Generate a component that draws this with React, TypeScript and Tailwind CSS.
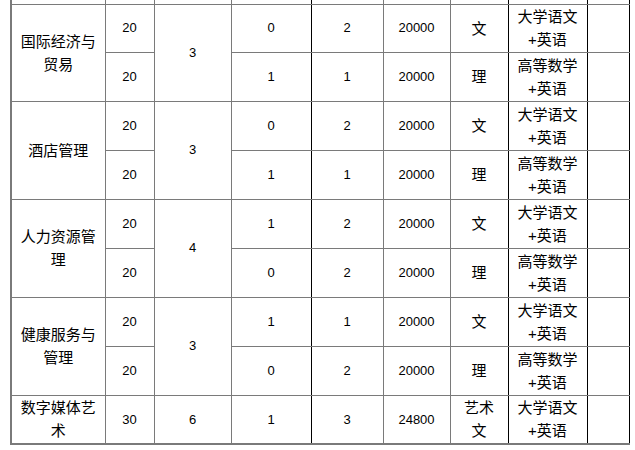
import type { ReactNode } from "react";

type Row = {
  major?: ReactNode;
  span?: number;
  count: string;
  groups?: string;
  a: string;
  b: string;
  fee: string;
  kind: ReactNode;
  exam: ReactNode;
  h: string;
};

const liberal = (
  <>
    大学语文
    <br />
    +英语
  </>
);
const science = (
  <>
    高等数学
    <br />
    +英语
  </>
);

const rows: Row[] = [
  { major: <>国际经济与<br />贸易</>, span: 2, count: "20", groups: "3", a: "0", b: "2", fee: "20000", kind: "文", exam: liberal, h: "h-[48px]" },
  { count: "20", a: "1", b: "1", fee: "20000", kind: "理", exam: science, h: "h-[49px]" },
  { major: "酒店管理", span: 2, count: "20", groups: "3", a: "0", b: "2", fee: "20000", kind: "文", exam: liberal, h: "h-[49px]" },
  { count: "20", a: "1", b: "1", fee: "20000", kind: "理", exam: science, h: "h-[49px]" },
  { major: <>人力资源管<br />理</>, span: 2, count: "20", groups: "4", a: "1", b: "2", fee: "20000", kind: "文", exam: liberal, h: "h-[49px]" },
  { count: "20", a: "0", b: "2", fee: "20000", kind: "理", exam: science, h: "h-[49px]" },
  { major: <>健康服务与<br />管理</>, span: 2, count: "20", groups: "3", a: "1", b: "1", fee: "20000", kind: "文", exam: liberal, h: "h-[49px]" },
  { count: "20", a: "0", b: "2", fee: "20000", kind: "理", exam: science, h: "h-[49px]" },
  { major: <>数字媒体艺<br />术</>, span: 1, count: "30", groups: "6", a: "1", b: "3", fee: "24800", kind: <>艺术<br />文</>, exam: liberal, h: "h-[49px]" },
];

// 灰色细线为主，部分竖线为黑色
const cell = "border border-[#7a7a7a] p-0 text-center align-middle";
const cjk = "text-[15px] leading-[23px]";
const num = "text-[13px]";

export default function App() {
  return (
    <div className="h-[450px] w-[635px] overflow-hidden bg-white pl-[10px] font-['Liberation_Sans','Noto_Sans_CJK_SC',sans-serif] text-black">
      <table className="w-[618px] table-fixed border-collapse">
        <colgroup>
          <col className="w-[94px]" />
          <col className="w-[49px]" />
          <col className="w-[77px]" />
          <col className="w-[80px]" />
          <col className="w-[72px]" />
          <col className="w-[67px]" />
          <col className="w-[58px]" />
          <col className="w-[79px]" />
          <col className="w-[42px]" />
        </colgroup>
        <tbody>
          {/* 上一行的残留部分 */}
          <tr className="h-[4px]">
            <td className={`${cell} border-t-0 border-l-2`} />
            <td className={`${cell} border-t-0`} />
            <td className={`${cell} border-t-0`} />
            <td className={`${cell} border-t-0 border-r-black`} />
            <td className={`${cell} border-t-0`} />
            <td className={`${cell} border-t-0`} />
            <td className={`${cell} border-t-0 border-r-black`} />
            <td className={`${cell} border-t-0 border-r-black`} />
            <td className={`${cell} border-t-0 border-r-black`} />
          </tr>
          {rows.map((r, i) => {
            const top = r.major ? "border-t-black" : "";
            const last = i === rows.length - 1 ? "border-b-2" : "";
            return (
              <tr key={i} className={r.h}>
                {r.major && (
                  <td rowSpan={r.span} className={`${cell} ${cjk} ${last} border-l-2 border-t-black`}>
                    {r.major}
                  </td>
                )}
                <td className={`${cell} ${num} ${top} ${last}`}>{r.count}</td>
                {r.groups && (
                  <td rowSpan={r.span} className={`${cell} ${num} ${last} border-t-black`}>
                    {r.groups}
                  </td>
                )}
                <td className={`${cell} ${num} ${top} ${last} border-r-black`}>{r.a}</td>
                <td className={`${cell} ${num} ${top} ${last}`}>{r.b}</td>
                <td className={`${cell} ${num} ${top} ${last}`}>{r.fee}</td>
                <td className={`${cell} ${cjk} ${top} ${last} border-r-black`}>{r.kind}</td>
                <td className={`${cell} ${cjk} ${top} ${last} border-r-black`}>{r.exam}</td>
                <td className={`${cell} ${top} ${last} border-r-black`} />
              </tr>
            );
          })}
        </tbody>
      </table>
    </div>
  );
}
